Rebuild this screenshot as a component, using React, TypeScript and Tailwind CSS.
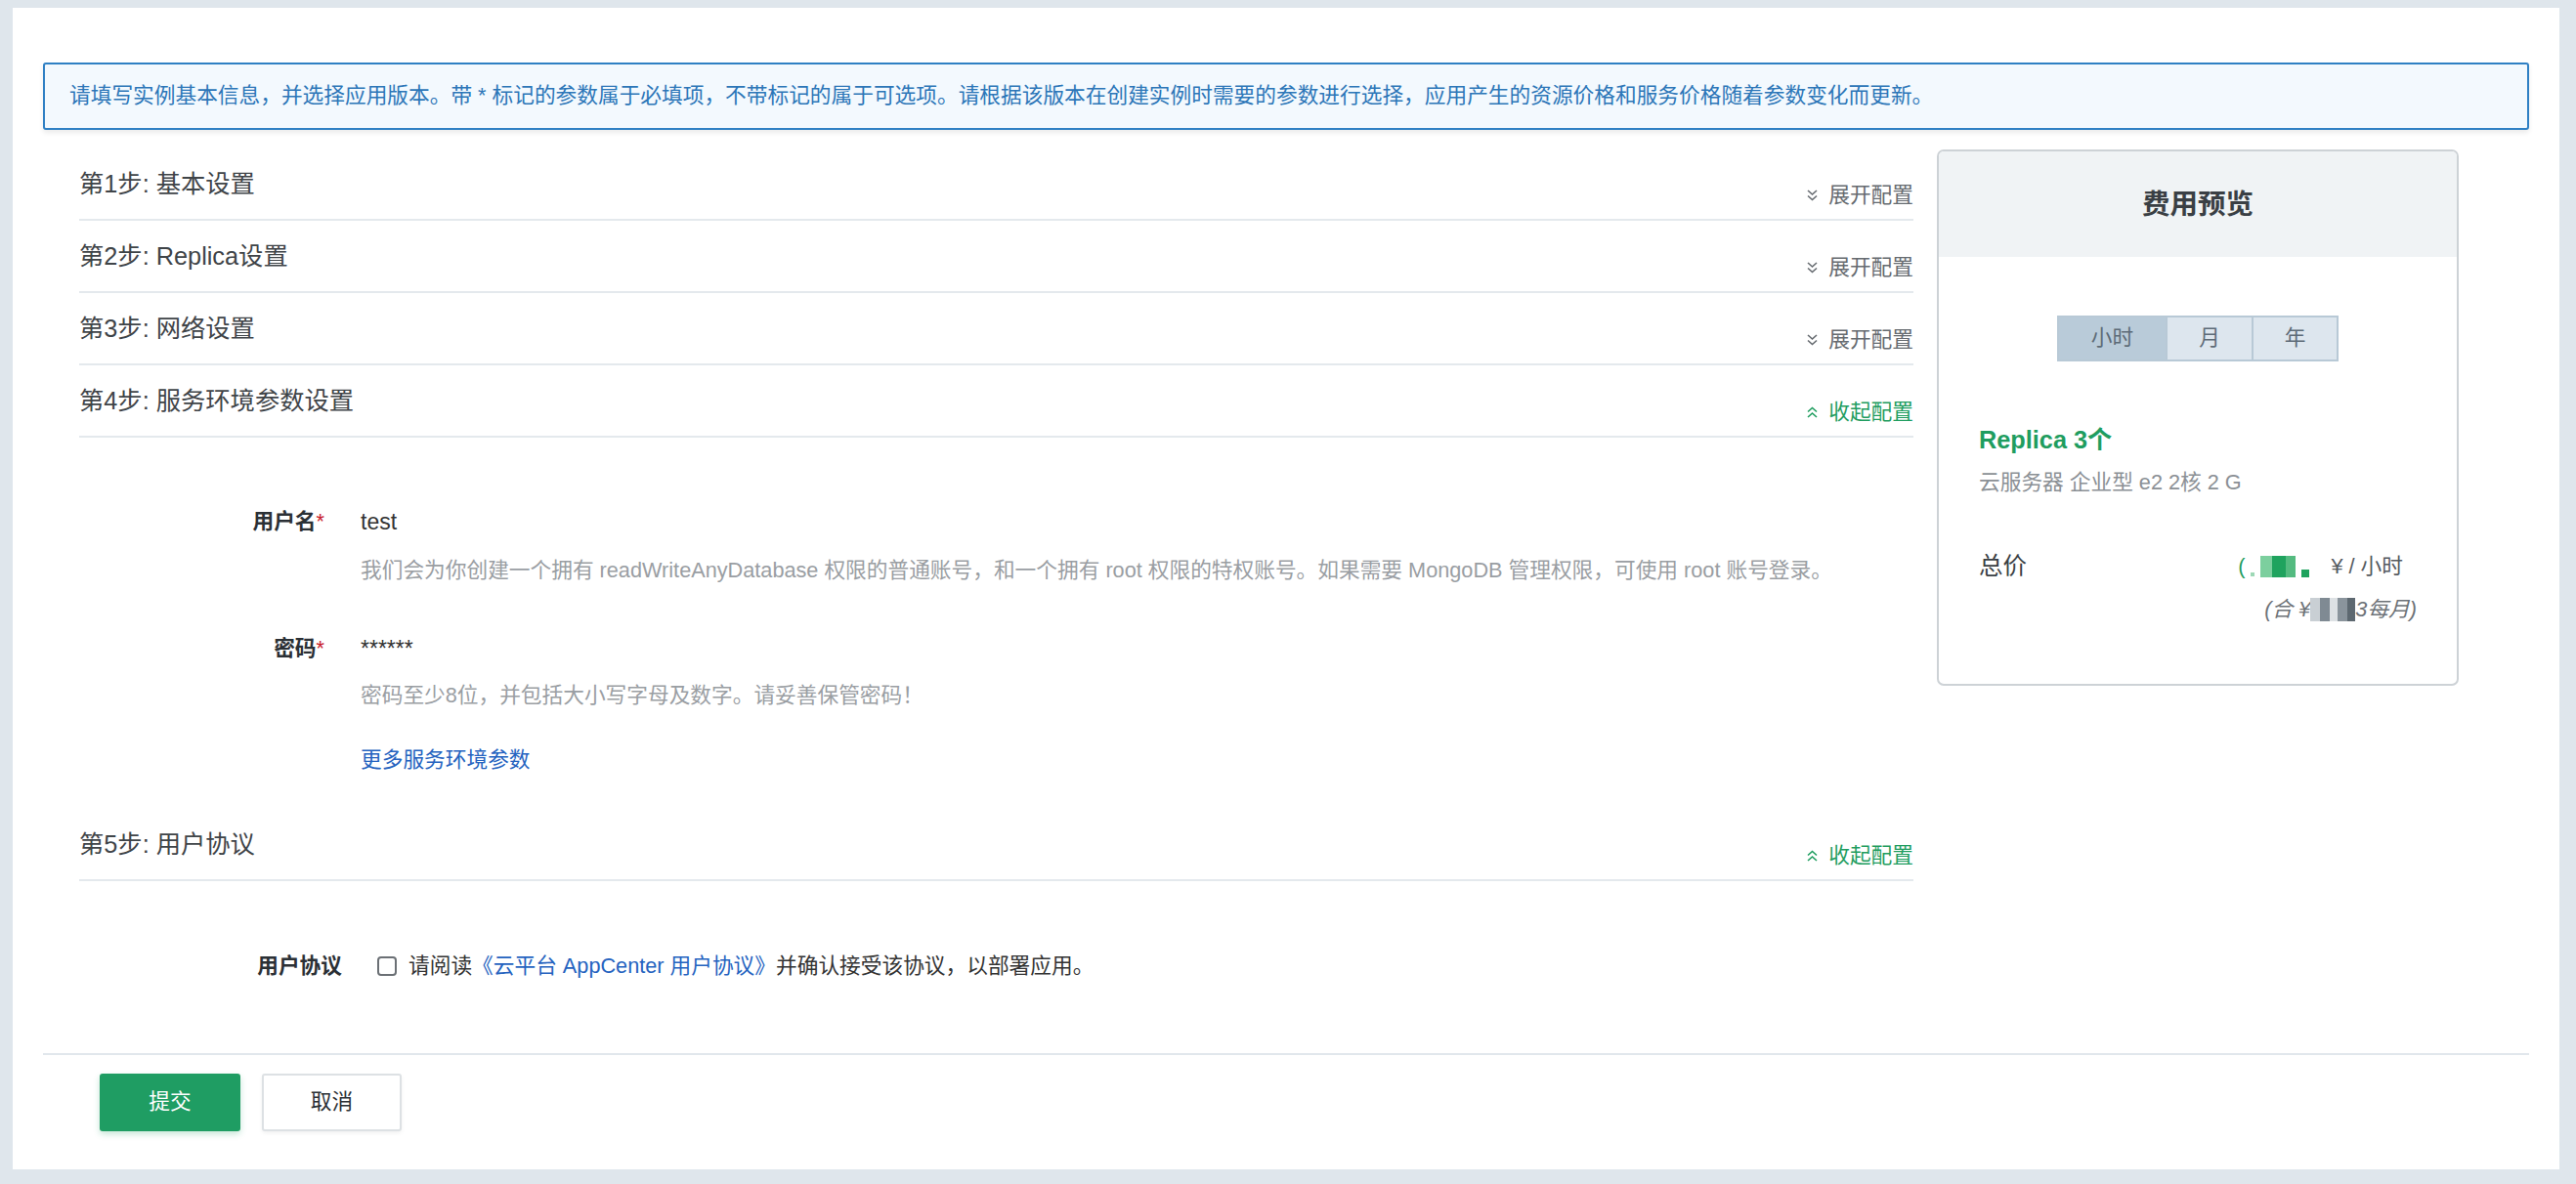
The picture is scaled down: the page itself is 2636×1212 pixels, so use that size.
import React from 'react';

const FONT = { fontFamily: '"Liberation Sans", "Noto Sans CJK SC", sans-serif' };

const Chevrons: React.FC<{ up?: boolean; color: string }> = ({ up, color }) => (
  <svg width="13" height="14" viewBox="0 0 13 14" fill="none" stroke={color} strokeWidth="1.6" className={up ? 'rotate-180' : ''}>
    <polyline points="2,2 6.5,6 11,2" />
    <polyline points="2,7.5 6.5,11.5 11,7.5" />
  </svg>
);

const StepHeader: React.FC<{ title: string; open?: boolean }> = ({ title, open }) => (
  <div className="h-[74px] flex justify-between border-b-2 border-[#e4e9ed]">
    <div className="pt-[19px] text-[25.3px] leading-[34px] text-[#3f4448]">{title}</div>
    {open ? (
      <div className="pt-[33px] flex items-center gap-[10px] h-[30px] box-content text-[21.7px] leading-[30px] text-[#1f9d5f]">
        <Chevrons up color="#1f9d5f" />
        <span>收起配置</span>
      </div>
    ) : (
      <div className="pt-[33px] flex items-center gap-[10px] h-[30px] box-content text-[21.7px] leading-[30px] text-[#666b70]">
        <Chevrons color="#666b70" />
        <span>展开配置</span>
      </div>
    )}
  </div>
);

const App: React.FC = () => {
  return (
    <div className="min-h-screen bg-[#dfe6ec] pt-[8px] pl-[13px] pr-[17px] pb-[15px]" style={FONT}>
      <div className="bg-white h-[1189px] pt-[56px] px-[31px] pb-[39px]">
        {/* notice */}
        <div className="h-[69px] border-2 border-[#2f80c4] bg-[#f3f9fe] rounded-[3px] shadow-[0_3px_5px_rgba(0,0,0,0.08)] flex items-center pl-[25px] text-[21.7px] text-[#2c76b8]">
          请填写实例基本信息，并选择应用版本。带 * 标记的参数属于必填项，不带标记的属于可选项。请根据该版本在创建实例时需要的参数进行选择，应用产生的资源价格和服务价格随着参数变化而更新。
        </div>

        <div className="flex gap-[24px] pl-[37px] pr-[72px] mt-[19px]">
          {/* steps */}
          <div className="flex-1">
            <StepHeader title="第1步: 基本设置" />
            <StepHeader title="第2步: Replica设置" />
            <StepHeader title="第3步: 网络设置" />
            <StepHeader title="第4步: 服务环境参数设置" open />

            <div className="pt-[71px] pb-[35px]">
              <div className="flex gap-[37px]">
                <div className="w-[251px] text-right text-[21.7px] leading-[30px] font-bold text-[#2b3035]">
                  用户名<span className="text-[#c8202b] font-normal">*</span>
                </div>
                <div className="flex-1">
                  <div className="text-[23px] leading-[30px] text-[#333]">test</div>
                  <div className="mt-[20px] text-[21.7px] leading-[30px] text-[#9a9ea3]">
                    我们会为你创建一个拥有 readWriteAnyDatabase 权限的普通账号，和一个拥有 root 权限的特权账号。如果需要 MongoDB 管理权限，可使用 root 账号登录。
                  </div>
                </div>
              </div>
              <div className="flex gap-[37px] mt-[50px]">
                <div className="w-[251px] text-right text-[21.7px] leading-[30px] font-bold text-[#2b3035]">
                  密码<span className="text-[#c8202b] font-normal">*</span>
                </div>
                <div className="flex-1">
                  <div className="text-[23px] leading-[30px] text-[#333]">******</div>
                  <div className="mt-[18px] text-[21.7px] leading-[30px] text-[#9a9ea3]">
                    密码至少8位，并包括大小写字母及数字。请妥善保管密码！
                  </div>
                  <div className="mt-[36px] text-[21.7px] leading-[30px] text-[#2563c0]">更多服务环境参数</div>
                </div>
              </div>
            </div>

            <StepHeader title="第5步: 用户协议" open />

            <div className="pt-[72px] pb-[74px] flex items-center">
              <div className="w-[269px] text-right text-[21.7px] leading-[30px] font-bold text-[#2b3035]">用户协议</div>
              <div className="ml-[36px] w-[20px] h-[20px] border-2 border-[#6b7075] rounded-[4px] bg-white" />
              <div className="ml-[12px] text-[21.7px] leading-[30px] text-[#333]">
                请阅读<span className="text-[#2563c0]">《云平台 AppCenter 用户协议》</span>并确认接受该协议，以部署应用。
              </div>
            </div>
          </div>

          {/* fee preview */}
          <div className="w-[534px] h-[549px] mt-[1px] border-2 border-[#cdd2d6] rounded-[7px] overflow-hidden self-start">
            <div className="h-[108px] bg-[#f0f3f5] flex items-center justify-center text-[28.5px] font-bold text-[#3a3f44]">
              费用预览
            </div>
            <div className="flex justify-center mt-[60px]">
              <div className="flex h-[47px] border-2 border-[#b8c9d6] text-[21.7px] text-[#5d6b77]">
                <div className="w-[109px] bg-[#b9cbd9] flex items-center justify-center">小时</div>
                <div className="w-[88px] bg-[#dde6ee] border-l-2 border-[#b8c9d6] flex items-center justify-center">月</div>
                <div className="w-[87px] bg-[#dde6ee] border-l-2 border-[#b8c9d6] flex items-center justify-center">年</div>
              </div>
            </div>
            <div className="px-[41px]">
              <div className="mt-[63px] text-[25.3px] leading-[34px] font-semibold text-[#1f9d5f]">Replica 3个</div>
              <div className="mt-[12px] text-[21.7px] leading-[30px] text-[#8b9095]">云服务器 企业型 e2 2核 2 G</div>
              <div className="mt-[54px] flex justify-between items-center pr-[14px]">
                <div className="text-[24.5px] leading-[34px] text-[#3a3f44]">总价</div>
                <div className="flex items-center text-[21.7px] leading-[30px] text-[#555a5f]">
                  <span className="text-[#1f9d5f]">(</span>
                  <span className="inline-block ml-[6px] w-[4px] h-[4px] mt-[16px] bg-[#9dd8b5]" />
                  <span className="inline-block ml-[6px] w-[12px] h-[22px] bg-[#7ccf9e]" />
                  <span className="inline-block w-[14px] h-[22px] bg-[#1fa35e]" />
                  <span className="inline-block w-[10px] h-[22px] bg-[#54bb80]" />
                  <span className="inline-block ml-[6px] w-[8px] h-[8px] mt-[14px] bg-[#1fa35e]" />
                  <span className="ml-[22px]">¥ / 小时</span>
                </div>
              </div>
              <div className="mt-[12px] flex justify-end items-center text-[21.7px] leading-[30px] italic text-[#6d7277]">
                <span>(合 ¥</span>
                <span className="inline-block w-[10px] h-[24px] bg-[#c9cfd4]" />
                <span className="inline-block w-[10px] h-[24px] bg-[#7f8a93]" />
                <span className="inline-block w-[8px] h-[24px] bg-[#dde1e4]" />
                <span className="inline-block w-[10px] h-[24px] bg-[#8a949c]" />
                <span className="inline-block w-[8px] h-[24px] bg-[#5d6870]" />
                <span>3每月)</span>
              </div>
            </div>
          </div>
        </div>

        {/* footer */}
        <div className="border-t-2 border-[#e1e7ec] pt-[19px] pl-[58px] flex gap-[22px]">
          <button className="w-[144px] h-[59px] bg-[#1f9d63] rounded-[3px] text-white text-[21.7px] shadow-[0_3px_6px_rgba(31,157,99,0.25)]">
            提交
          </button>
          <button className="w-[143px] h-[59px] bg-white border-2 border-[#dde1e4] rounded-[3px] text-[#2b3035] text-[21.7px] shadow-[0_2px_4px_rgba(0,0,0,0.06)]">
            取消
          </button>
        </div>
      </div>
    </div>
  );
};

export default App;
